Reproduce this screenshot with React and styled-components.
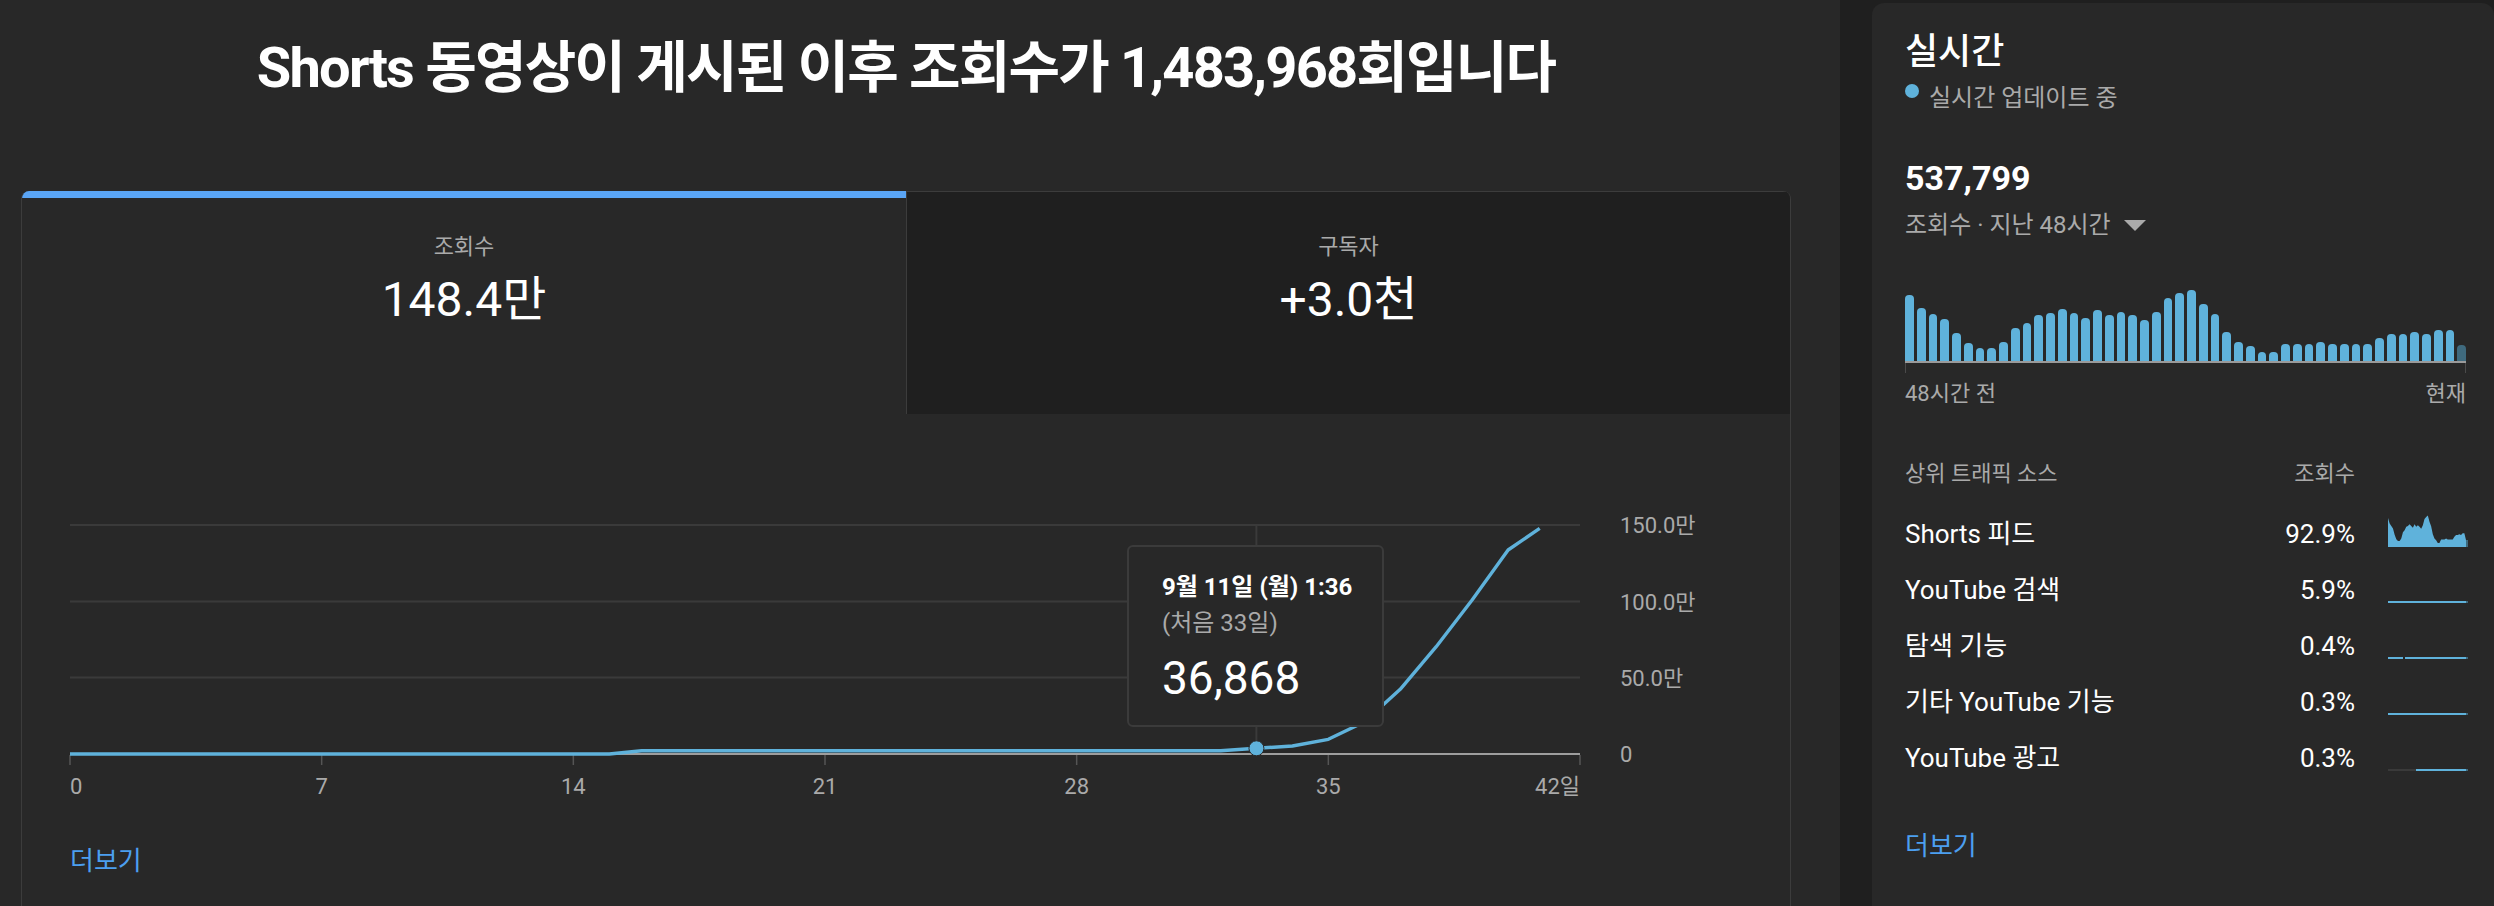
import React from 'react';
import styled, { createGlobalStyle } from 'styled-components';

const FONT = `Roboto, "Noto Sans CJK KR", sans-serif`;
const BLUE_LINE = '#5fb2db';
const GRAY = '#aaaaaa';

const GlobalStyle = createGlobalStyle`
  html, body { margin: 0; padding: 0; background: #1f1f1f; }
  body { font-family: ${FONT}; color: #ffffff; -webkit-font-smoothing: antialiased; }
  * { box-sizing: border-box; }
`;

const Page = styled.div`
  display: flex;
  width: 2494px;
  height: 906px;
  overflow: hidden;
  background: #1f1f1f;
`;

const Main = styled.main`
  flex: none;
  width: 1840px;
  height: 906px;
  background: #282828;
  padding: 0 49px 0 21px;
  display: flex;
  flex-direction: column;
`;

const Title = styled.h1`
  flex: none;
  margin: 0;
  height: 191px;
  padding-top: 36px;
  text-align: center;
  font-family: ${FONT};
  font-size: 56px;
  font-weight: 700;
  line-height: 64px;
  letter-spacing: -1.8px;
  color: #ffffff;
  white-space: nowrap;
`;

const Card = styled.section`
  flex: 1;
  display: flex;
  flex-direction: column;
  border: 1px solid #3c3c3c;
  border-top: none;
  border-bottom: none;
  border-radius: 8px 8px 0 0;
  overflow: hidden;
`;

const Tabs = styled.div`
  flex: none;
  display: grid;
  grid-template-columns: 1fr 1fr;
  height: 223px;
`;

const Tab = styled.div`
  display: flex;
  flex-direction: column;
  align-items: center;
  background: ${p => (p.$active ? '#282828' : '#1f1f1f')};
  border-top: ${p => (p.$active ? '7px solid #5aa5f5' : '1px solid #3c3c3c')};
  border-left: ${p => (p.$active ? 'none' : '1px solid #3c3c3c')};
  padding-top: ${p => (p.$active ? 34 : 40)}px;
`;

const TabLabel = styled.div`
  height: 30px;
  line-height: 30px;
  font-size: 22px;
  color: ${GRAY};
`;

const TabValue = styled.div`
  margin-top: 10px;
  height: 56px;
  line-height: 56px;
  font-size: 48px;
  color: #ffffff;
`;

const ChartArea = styled.div`
  flex: none;
  position: relative;
  height: 420px;
`;

const AxisText = styled.text`
  font-family: ${FONT};
  font-size: 22px;
  fill: ${GRAY};
`;

const Tooltip = styled.div`
  position: absolute;
  left: 1105px;
  top: 131px;
  width: 257px;
  height: 182px;
  background: #282828;
  border: 2px solid #3b3b3b;
  border-radius: 6px;
  padding: 25px 0 0 33px;
  display: flex;
  flex-direction: column;
`;

const TipDate = styled.div`
  height: 30px;
  line-height: 30px;
  font-size: 24px;
  font-weight: 700;
  color: #ffffff;
  white-space: nowrap;
`;

const TipSub = styled.div`
  margin-top: 6px;
  height: 30px;
  line-height: 30px;
  font-size: 24px;
  color: ${GRAY};
`;

const TipValue = styled.div`
  margin-top: 13px;
  height: 54px;
  line-height: 54px;
  font-size: 46px;
  color: #ffffff;
`;

const MoreLink = styled.a`
  display: block;
  margin-top: 11px;
  padding-left: 48px;
  height: 32px;
  line-height: 32px;
  font-size: 26px;
  color: #4c9ff0;
  text-decoration: none;
`;

/* ---------- side panel ---------- */

const Side = styled.aside`
  flex: 1;
  margin: 3px 0 0 32px;
  background: #282828;
  border-radius: 12px 12px 0 0;
  padding: 27px 26px 0 33px;
  display: flex;
  flex-direction: column;
`;

const SideTitle = styled.div`
  height: 44px;
  line-height: 44px;
  font-size: 36px;
  font-weight: 500;
`;

const LiveRow = styled.div`
  margin-top: 9px;
  display: flex;
  align-items: flex-start;
  gap: 10px;
  height: 30px;
`;

const LiveDot = styled.span`
  flex: none;
  width: 14px;
  height: 14px;
  margin-top: 1px;
  border-radius: 50%;
  background: ${BLUE_LINE};
`;

const LiveText = styled.span`
  line-height: 30px;
  font-size: 24px;
  color: ${GRAY};
`;

const BigNumber = styled.div`
  margin-top: 45px;
  height: 40px;
  line-height: 40px;
  font-size: 34px;
  font-weight: 700;
`;

const MetricRow = styled.div`
  margin-top: 12px;
  height: 30px;
  display: flex;
  align-items: center;
  gap: 13px;
  font-size: 24px;
  line-height: 30px;
  color: ${GRAY};
`;

const BarRow = styled.div`
  margin-top: 50px;
  margin-right: 2px;
  height: 71px;
  display: flex;
  align-items: flex-end;
  gap: 3px;
`;

const Bar = styled.div`
  flex: 1;
  border-radius: 4px 4px 0 0;
  background: ${p => (p.$dim ? '#3f6a7e' : BLUE_LINE)};
`;

const BarAxis = styled.div`
  margin-right: 2px;
  height: 2px;
  background: #9a9a9a;
`;

const AxisTicks = styled.div`
  margin-right: 2px;
  height: 10px;
  display: flex;
  justify-content: space-between;
`;

const Tick = styled.span`
  width: 1px;
  height: 10px;
  background: #4a4a4a;
`;

const BarLabels = styled.div`
  margin-right: 2px;
  margin-top: 6px;
  height: 30px;
  line-height: 30px;
  display: flex;
  justify-content: space-between;
  font-size: 22px;
  color: ${GRAY};
`;

const Traffic = styled.div`
  margin-top: 33px;
  display: grid;
  grid-template-columns: 1fr auto 80px;
  grid-template-rows: 64px repeat(5, 56px);
  column-gap: 33px;
  align-items: center;
`;

const HeadCell = styled.div`
  font-size: 22px;
  line-height: 30px;
  color: ${GRAY};
  text-align: ${p => (p.$right ? 'right' : 'left')};
`;

const SourceName = styled.div`
  font-size: 26px;
  line-height: 32px;
  color: #ffffff;
  white-space: nowrap;
`;

const SourcePct = styled.div`
  font-size: 26px;
  line-height: 32px;
  color: #ffffff;
  text-align: right;
`;

const Spark = styled.svg`
  display: block;
  align-self: start;
  margin-top: 9px;
`;

const SideMore = styled.a`
  display: block;
  margin-top: 44px;
  height: 32px;
  line-height: 32px;
  font-size: 26px;
  color: #4c9ff0;
  text-decoration: none;
`;

/* ---------- data ---------- */

const bars = [
  65.7, 53.3, 47.3, 41.7, 27.7, 17.7, 13.3, 13.3, 19.3, 33.3,
  37.7, 45.7, 47.7, 51.7, 47.7, 43.3, 51.3, 45.7, 49.3, 45.7,
  41.3, 49.3, 63.3, 67.7, 71.3, 57, 47, 29, 19, 15,
  9, 9, 17, 17, 17, 19, 17, 17, 17, 17,
  23, 27, 27, 29, 27, 31, 31, 16,
];

const CHART_L = 48;
const CHART_R = 1558;
const DAY = (CHART_R - CHART_L) / 42;
const dx = d => CHART_L + d * DAY;

const linePts = [
  [0, 340], [15, 340], [15.9, 336.7], [32, 336.7], [33, 334.3], [34, 332],
  [35, 325.3], [36, 308], [37, 275.3], [38, 232.7], [39, 186], [40, 136], [40.88, 114.3],
];

const gridYs = [111, 187.5, 263.5];
const yLabels = [
  ['150.0만', 111], ['100.0만', 187.5], ['50.0만', 263.5], ['0', 340],
];
const xTicks = [0, 7, 14, 21, 28, 35, 42];

function MainChart() {
  const path = linePts.map(([d, y], i) => `${i ? 'L' : 'M'}${dx(d).toFixed(1)} ${y}`).join(' ');
  return (
    <svg width="1768" height="420" style={{ display: 'block' }}>
      {gridYs.map(y => (
        <line key={y} x1={CHART_L} x2={CHART_R} y1={y} y2={y} stroke="#3a3a3a" strokeWidth="2" />
      ))}
      <line x1={dx(33)} x2={dx(33)} y1={111} y2={340} stroke="#3a3a3a" strokeWidth="2" />
      <line x1={CHART_L} x2={CHART_R} y1={340} y2={340} stroke="#9e9e9e" strokeWidth="2" />
      {xTicks.map(d => (
        <line key={d} x1={dx(d)} x2={dx(d)} y1={341} y2={351} stroke="#555555" strokeWidth="1.5" />
      ))}
      {xTicks.map((d, i) => (
        <AxisText
          key={`t${d}`}
          x={dx(d)}
          y={380}
          textAnchor={i === 0 ? 'start' : i === xTicks.length - 1 ? 'end' : 'middle'}
        >
          {i === xTicks.length - 1 ? `${d}일` : d}
        </AxisText>
      ))}
      {yLabels.map(([t, y]) => (
        <AxisText key={t} x={1598} y={y + 8}>{t}</AxisText>
      ))}
      <path d={path} fill="none" stroke={BLUE_LINE} strokeWidth="3.4" strokeLinejoin="round" />
      <circle cx={dx(33)} cy={334.3} r="7.5" fill={BLUE_LINE} stroke="#282828" strokeWidth="1" />
    </svg>
  );
}

function ShortsSpark() {
  const w = 80;
  const h = 32;
  const max = 71.3;
  const step = 78 / (bars.length - 1);
  const pts = bars.map((v, i) => [i * step, h - (v / max) * 31.5]);
  const d = `M0 ${h} ` + pts.map(([x, y]) => `L${x.toFixed(2)} ${y.toFixed(2)}`).join(' ') + ` L78 ${h} Z`;
  return (
    <Spark width={w} height={h}>
      <path d={d} fill={BLUE_LINE} />
      <rect x="78" y={h - 7} width="2" height="7" fill="#3f6a7e" />
    </Spark>
  );
}

function LineSpark({ segs }) {
  return (
    <Spark width="80" height="32">
      {segs.map(([a, b, c], i) => (
        <rect key={i} x={a} y="30" width={b - a} height="2" fill={c} />
      ))}
      <rect x="78" y="30" width="2" height="2" fill="#3f6a7e" />
    </Spark>
  );
}

const sources = [
  { name: 'Shorts 피드', pct: '92.9%', spark: <ShortsSpark /> },
  { name: 'YouTube 검색', pct: '5.9%', spark: <LineSpark segs={[[0, 78, BLUE_LINE]]} /> },
  { name: '탐색 기능', pct: '0.4%', spark: <LineSpark segs={[[0, 15, BLUE_LINE], [17, 78, BLUE_LINE]]} /> },
  { name: '기타 YouTube 기능', pct: '0.3%', spark: <LineSpark segs={[[0, 78, BLUE_LINE]]} /> },
  { name: 'YouTube 광고', pct: '0.3%', spark: <LineSpark segs={[[0, 28, '#3a3a3a'], [28, 78, BLUE_LINE]]} /> },
];

export default function App() {
  return (
    <>
      <GlobalStyle />
      <Page>
        <Main>
          <Title>Shorts 동영상이 게시된 이후 조회수가 1,483,968회입니다</Title>
          <Card>
            <Tabs>
              <Tab $active>
                <TabLabel>조회수</TabLabel>
                <TabValue>148.4만</TabValue>
              </Tab>
              <Tab>
                <TabLabel>구독자</TabLabel>
                <TabValue>+3.0천</TabValue>
              </Tab>
            </Tabs>
            <ChartArea>
              <MainChart />
              <Tooltip>
                <TipDate>9월 11일 (월) 1:36</TipDate>
                <TipSub>(처음 33일)</TipSub>
                <TipValue>36,868</TipValue>
              </Tooltip>
            </ChartArea>
            <MoreLink href="#">더보기</MoreLink>
          </Card>
        </Main>
        <Side>
          <SideTitle>실시간</SideTitle>
          <LiveRow>
            <LiveDot />
            <LiveText>실시간 업데이트 중</LiveText>
          </LiveRow>
          <BigNumber>537,799</BigNumber>
          <MetricRow>
            <span>조회수 · 지난 48시간</span>
            <svg width="22" height="11" viewBox="0 0 22 11">
              <polygon points="0,0 22,0 11,11" fill={GRAY} />
            </svg>
          </MetricRow>
          <BarRow>
            {bars.map((v, i) => (
              <Bar key={i} $dim={i === bars.length - 1} style={{ height: `${v}px` }} />
            ))}
          </BarRow>
          <BarAxis />
          <AxisTicks>
            <Tick />
            <Tick />
          </AxisTicks>
          <BarLabels>
            <span>48시간 전</span>
            <span>현재</span>
          </BarLabels>
          <Traffic>
            <HeadCell>상위 트래픽 소스</HeadCell>
            <HeadCell $right>조회수</HeadCell>
            <div />
            {sources.map(s => (
              <React.Fragment key={s.name}>
                <SourceName>{s.name}</SourceName>
                <SourcePct>{s.pct}</SourcePct>
                {s.spark}
              </React.Fragment>
            ))}
          </Traffic>
          <SideMore href="#">더보기</SideMore>
        </Side>
      </Page>
    </>
  );
}
